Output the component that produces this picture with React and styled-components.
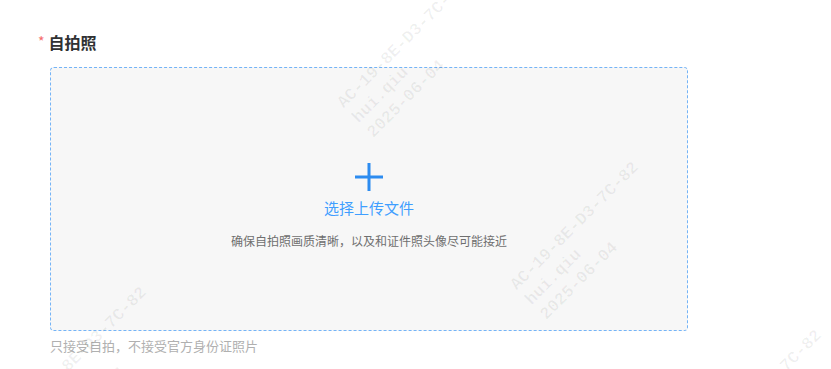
import React from "react";
import styled, { createGlobalStyle } from "styled-components";

const GlobalStyle = createGlobalStyle`
  html, body {
    margin: 0;
    padding: 0;
    background: #ffffff;
  }
  body {
    font-family: "Noto Sans CJK SC", "Noto Sans", sans-serif;
  }
`;

const PageStyle = styled.div`
  position: relative;
  width: 831px;
  height: 369px;
  overflow: hidden;
  box-sizing: border-box;
  padding: 31px 0 0 50px;
`;

const LabelStyle = styled.div`
  display: flex;
  align-items: center;
  margin-left: -12px;
  height: 22px;
  font-size: 16px;
  line-height: 22px;
  font-weight: 600;
  color: #303133;
`;

const RequiredStyle = styled.span`
  color: #f56c6c;
  font-size: 14px;
  font-weight: 400;
  margin-right: 4px;
  transform: translateY(-1px);
`;

const DropZoneStyle = styled.div`
  margin-top: 14px;
  width: 638px;
  height: 264px;
  box-sizing: border-box;
  border: 1px dashed #74b4f7;
  border-radius: 4px;
  background: #f7f7f7;
  display: flex;
  flex-direction: column;
  align-items: center;
  padding-top: 95px;
`;

const PickTextStyle = styled.div`
  margin-top: 6px;
  font-size: 15px;
  line-height: 21px;
  color: #409eff;
`;

const HintStyle = styled.div`
  margin-top: 14px;
  font-size: 12px;
  line-height: 18px;
  color: #6f6f6f;
`;

const NoteStyle = styled.div`
  margin-top: 5px;
  font-size: 13px;
  line-height: 20px;
  color: #b0b0b0;
`;

const MarkLayerStyle = styled.div`
  position: absolute;
  inset: 0;
  pointer-events: none;
`;

const MarkStyle = styled.div`
  position: absolute;
  transform: rotate(-45deg);
  transform-origin: 0 0;
  font-family: "Liberation Mono", monospace;
  font-size: 17px;
  font-weight: 700;
  line-height: 21px;
  color: rgba(0, 0, 0, 0.06);
  white-space: pre;
`;

const marks = [
  { x: 333, y: 98 },
  { x: 506, y: 280 },
  { x: 14, y: 405 },
  { x: 689, y: 448 },
];

function PlusIcon() {
  return (
    <svg width="28" height="28" viewBox="0 0 28 28">
      <rect x="12.5" y="0" width="3" height="28" fill="#2d8cf0" />
      <rect x="0" y="12.5" width="28" height="3" fill="#2d8cf0" />
    </svg>
  );
}

export default function App() {
  return (
    <>
      <GlobalStyle />
      <PageStyle>
        <LabelStyle>
          <RequiredStyle>*</RequiredStyle>
          自拍照
        </LabelStyle>
        <DropZoneStyle>
          <PlusIcon />
          <PickTextStyle>选择上传文件</PickTextStyle>
          <HintStyle>确保自拍照画质清晰，以及和证件照头像尽可能接近</HintStyle>
        </DropZoneStyle>
        <NoteStyle>只接受自拍，不接受官方身份证照片</NoteStyle>
        <MarkLayerStyle>
          {marks.map((m, i) => (
            <MarkStyle key={i} style={{ left: m.x, top: m.y }}>
              {"AC-19-8E-D3-7C-82\nhui.qiu\n2025-06-04"}
            </MarkStyle>
          ))}
        </MarkLayerStyle>
      </PageStyle>
    </>
  );
}
